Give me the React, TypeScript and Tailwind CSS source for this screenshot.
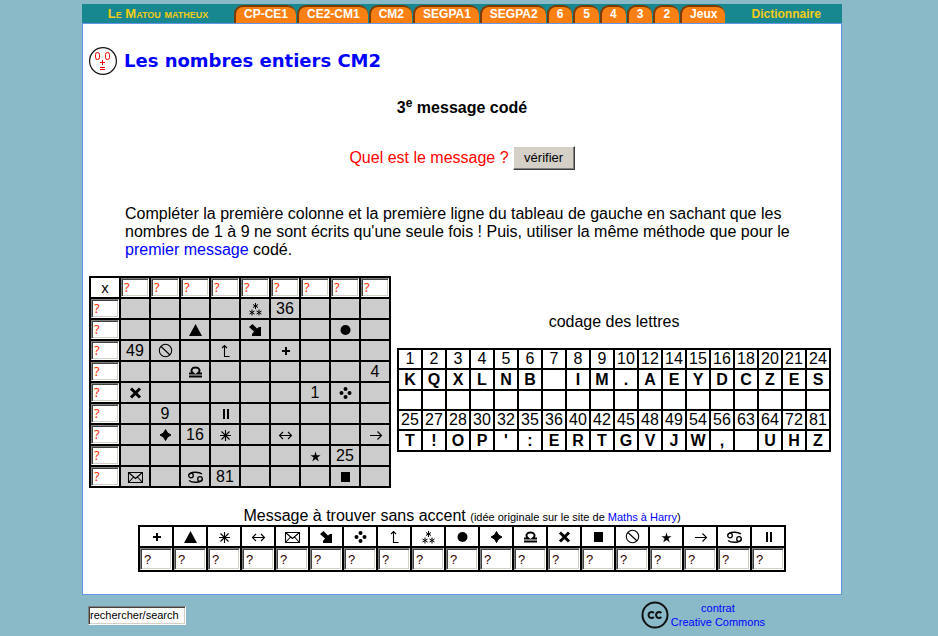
import React from "react";

type SymbolName =
  | "plus" | "triangle" | "star8" | "leftright" | "mail" | "southeast" | "dots" | "up"
  | "asterism" | "disc" | "star4" | "libra" | "cross" | "square" | "forbidden" | "star5"
  | "right" | "cancer" | "bars";

const shapes: Record<SymbolName, React.ReactNode> = {
  plus: <path d="M9 4v8M5 8h8" strokeWidth="2" shapeRendering="crispEdges" />,
  triangle: <path d="M8.500 2 15 14H2z" fill="currentColor" stroke="none" />,
  star8: <path d="M8.500 3v11M3 8.500h11M4.500 4.500l8 8M12.500 4.500l-8 8" />,
  leftright: <path d="M2.500 8.500h12M6 5 2.500 8.500 6 12M11 5l3.500 3.500L11 12" />,
  mail: <path d="M1.500 3.500h14v10h-14zM1.500 3.500l7 6 7-6M1.500 13.500l5-5.500M15.500 13.500l-5-5.500" />,
  southeast: <path d="M2 5l3.500-3L10 6.500 12 5h2v9H5v-2l2-2.500z" fill="currentColor" stroke="none" />,
  dots: (
    <g fill="currentColor" stroke="none">
      <circle cx="8.500" cy="4" r="2" /><circle cx="8.500" cy="12" r="2" />
      <circle cx="4.500" cy="8" r="2" /><circle cx="12.500" cy="8" r="2" />
    </g>
  ),
  up: <path d="M7.500 2.500v11h5M5 5l2.500-2.500L10 5" />,
  asterism: (
    <path
      d="M8.500 2v6M6 3.500l5 3M11 3.500l-5 3M5 8.500v6M2.500 10l5 3M7.500 10l-5 3M12 8.500v6M9.500 10l5 3M14.500 10l-5 3"
      strokeWidth="1"
    />
  ),
  disc: <circle cx="8.500" cy="8" r="5" fill="currentColor" stroke="none" />,
  star4: <path d="M8.500 2.500l2 3.500 3.500 2-3.500 2-2 3.500-2-3.500L3 8l3.500-2z" fill="currentColor" strokeWidth="1" />,
  libra: <path d="M2 12.500h13M2 9.500h4.500c-4-3 -1.500-6 2-6s6 3 2 6H15" strokeWidth="1.800" />,
  cross: <path d="M4 3.500l9 9M13 3.500l-9 9" strokeWidth="3" />,
  square: <path d="M4 3h9v10H4z" fill="currentColor" stroke="none" shapeRendering="crispEdges" />,
  forbidden: <><circle cx="8.500" cy="7.500" r="6.200" /><path d="M4 3.500l9 8.500" /></>,
  star5: <path d="M8.500 3.500l1.100 3.700h4l-3.200 2.200 1.400 4.100-3.300-2.600-3.300 2.600 1.400-4.100-3.200-2.200h4z" fill="currentColor" stroke="none" />,
  right: <path d="M3 8.500h11.500M10.500 4.500l4 4-4 4" />,
  cancer: (
    <g strokeWidth="1.300">
      <circle cx="4" cy="6.500" r="2.300" /><circle cx="13" cy="10" r="2.300" />
      <path d="M1.800 6C3 2.500 12 2.500 15 5M15.200 10.500C14 14 5 14 2 11.500" />
    </g>
  ),
  bars: <path d="M7 3v10M11 3v10" strokeWidth="2" shapeRendering="crispEdges" />,
};

function Glyph({ name }: { name: SymbolName }) {
  return (
    <svg viewBox="0 0 16 16" className="mx-auto block h-4 w-4" fill="none" stroke="currentColor" strokeWidth="1.1" role="img" aria-label={name}>
      {shapes[name]}
    </svg>
  );
}

const sunken =
  "block w-full border border-t-[#808080] border-l-[#808080] border-r-white border-b-white bg-white shadow-[inset_1px_1px_0_#404040,inset_-1px_-1px_0_#d4d0c8] outline-none";

const tabs = ["CP-CE1", "CE2-CM1", "CM2", "SEGPA1", "SEGPA2", "6", "5", "4", "3", "2", "Jeux"];

const grid: Record<number, string | SymbolName>[] = [
  { 4: "asterism", 5: "36" },
  { 2: "triangle", 4: "southeast", 7: "disc" },
  { 0: "49", 1: "forbidden", 3: "up", 5: "plus" },
  { 2: "libra", 8: "4" },
  { 0: "cross", 6: "1", 7: "dots" },
  { 1: "9", 3: "bars" },
  { 1: "star4", 2: "16", 3: "star8", 5: "leftright", 8: "right" },
  { 6: "star5", 7: "25" },
  { 0: "mail", 2: "cancer", 3: "81", 7: "square" },
];

const codeRows = [
  ["1", "2", "3", "4", "5", "6", "7", "8", "9", "10", "12", "14", "15", "16", "18", "20", "21", "24"],
  ["K", "Q", "X", "L", "N", "B", "", "I", "M", ".", "A", "E", "Y", "D", "C", "Z", "E", "S"],
  Array(18).fill(""),
  ["25", "27", "28", "30", "32", "35", "36", "40", "42", "45", "48", "49", "54", "56", "63", "64", "72", "81"],
  ["T", "!", "O", "P", "'", ":", "E", "R", "T", "G", "V", "J", "W", ",", "", "U", "H", "Z"],
];

const message: SymbolName[] = [
  "plus", "triangle", "star8", "leftright", "mail", "southeast", "dots", "up", "asterism", "disc",
  "star4", "libra", "cross", "square", "forbidden", "star5", "right", "cancer", "bars",
];

const nine = [0, 1, 2, 3, 4, 5, 6, 7, 8];

function GridInput({ label }: { label: string }) {
  return (
    <input
      aria-label={label}
      defaultValue="?"
      className={`${sunken} h-[19px] pb-[2px] pl-[2px] font-['Noto_Sans',sans-serif] text-[13px] leading-4 text-[#ff3300]`}
    />
  );
}

function MultiplicationGrid() {
  return (
    <table className="w-[302px] shrink-0 table-fixed border-collapse text-center text-base leading-[18px]">
      <tbody>
        <tr>
          <th className="h-[21px] border-2 border-black p-0 font-['Noto_Sans',sans-serif] text-sm leading-[18px] font-normal">x</th>
          {nine.map((c) => (
            <td key={c} className="h-[21px] border-2 border-black p-0"><GridInput label={`colonne ${c + 1}`} /></td>
          ))}
        </tr>
        {grid.map((row, r) => (
          <tr key={r}>
            <td className="h-[21px] border-2 border-black p-0"><GridInput label={`ligne ${r + 1}`} /></td>
            {nine.map((c) => {
              const v = row[c];
              return (
                <td key={c} className="h-[21px] border-2 border-black bg-[#cccccc] p-0">
                  {v && v in shapes ? <Glyph name={v as SymbolName} /> : v}
                </td>
              );
            })}
          </tr>
        ))}
      </tbody>
    </table>
  );
}

function CodeTable() {
  return (
    <div className="w-[434px] shrink-0 pt-px text-center">
      <p className="mb-[17px] leading-[18px]">codage des lettres</p>
      <table className="w-full table-fixed border-collapse leading-[18px]">
        <tbody>
          {codeRows.map((row, r) => {
            const letters = r === 1 || r === 4;
            return (
              <tr key={r} className={letters ? "h-[21px] font-bold" : "h-5"}>
                {row.map((v, c) => (
                  <td key={c} className="border-2 border-black p-0">{v}</td>
                ))}
              </tr>
            );
          })}
        </tbody>
      </table>
    </div>
  );
}

function MessageTable() {
  return (
    <table className="mx-auto w-[648px] table-fixed border-collapse">
      <tbody>
        <tr className="h-[21px]">
          {message.map((s) => (
            <td key={s} className="border-2 border-black p-0"><Glyph name={s} /></td>
          ))}
        </tr>
        <tr className="h-6">
          {message.map((s, i) => (
            <td key={s} className="border-2 border-black p-0">
              <input
                aria-label={`lettre ${i + 1}`}
                defaultValue="?"
                className={`${sunken} h-[22px] pl-[3px] font-['Liberation_Sans',Arial,sans-serif] text-[13px] leading-4 text-[#330000]`}
              />
            </td>
          ))}
        </tr>
      </tbody>
    </table>
  );
}

export default function App() {
  return (
    <div className="min-h-screen bg-[#8abac8] pt-1 pr-[14px] font-['Liberation_Sans',Arial,sans-serif] text-base text-black">
      <div className="mx-auto w-full max-w-[760px]">
        <nav className="flex h-[19px] items-end bg-[#188890] text-xs font-bold text-[#f5cc14]">
          <a href="#accueil" className="w-[152px] self-center text-center text-[13px] [font-variant:small-caps]">Le Matou matheux</a>
          {tabs.map((t) => (
            <a
              key={t}
              href={`#${t}`}
              className={`mr-px h-[18px] rounded-t-[9px] border-t-2 border-l-2 border-[#7a3a00] bg-[#fa8014] pl-2 leading-[14px] text-white ${t.length > 1 ? "pr-2" : "pr-[9px]"}`}
            >
              {t}
            </a>
          ))}
          <a href="#dictionnaire" className="flex-1 self-center pl-1 text-center">Dictionnaire</a>
        </nav>

        <main className="border border-[#6495ed] bg-white pb-[22px]">
          <header className="flex items-center gap-[7px] pt-[23px] pl-[6px]">
            <svg viewBox="0 0 28 28" className="h-7 w-7" fill="none" stroke="#f00000" role="img" aria-label="Matou">
              <circle cx="14" cy="14" r="13.400" stroke="#111111" strokeWidth="1.200" />
              <rect x="6.500" y="5.500" width="4" height="7" rx="2" />
              <rect x="16.500" y="5.500" width="4" height="7" rx="2" />
              <path d="M13.500 13v5M11 15.500h5M11 20.500h5M11 22.500h5" />
            </svg>
            <h1 className="font-['DejaVu_Sans',Verdana,sans-serif] text-lg leading-7 font-bold text-[#0000ff]">Les nombres entiers CM2</h1>
          </header>

          <h2 className="mt-[23px] text-center leading-5 font-bold">
            3<sup className="text-xs">e</sup> message codé
          </h2>

          <div className="mt-[28px] flex items-center justify-center gap-1 text-[#ff0000]">
            <span>Quel est le message ?</span>
            <button
              type="button"
              className="h-6 w-[62px] border border-t-white border-l-white border-r-[#404040] border-b-[#404040] bg-[#d4d0c8] text-[13px] text-black shadow-[inset_-1px_-1px_0_#808080]"
            >
              vérifier
            </button>
          </div>

          <p className="mt-[35px] px-[42px] leading-[18px]">
            Compléter la première colonne et la première ligne du tableau de gauche en sachant que les nombres de 1 à 9 ne
            sont écrits qu'une seule fois ! Puis, utiliser la même méthode que pour le{" "}
            <a href="#premier-message" className="text-[#0000ff]">premier message</a> codé.
          </p>

          <section className="mt-[17px] flex items-center gap-[6px] pl-[6px]">
            <MultiplicationGrid />
            <CodeTable />
          </section>

          <section className="mt-5">
            <p className="text-center leading-[15px]">
              Message à trouver sans accent{" "}
              <small className="text-[11px]">
                (idée originale sur le site de <a href="#maths-a-harry" className="text-[#0000ff]">Maths à Harry</a>)
              </small>
            </p>
            <MessageTable />
          </section>
        </main>

        <footer className="flex items-center justify-between pt-[6px] pr-[77px] pl-[6px]">
          <input
            aria-label="rechercher"
            defaultValue="rechercher/search"
            className={`${sunken} h-[19px] max-w-[98px] pl-px font-['Liberation_Sans',Arial,sans-serif] text-[11px]`}
          />
          <div className="flex items-center gap-[2px]">
            <svg viewBox="0 0 28 28" className="h-7 w-7" fill="none" stroke="#111111" role="img" aria-label="Creative Commons">
              <circle cx="14" cy="14" r="12.500" strokeWidth="2" />
              <path d="M12.800 12a3 3 0 1 0 0 4M20.300 12a3 3 0 1 0 0 4" strokeWidth="2" />
            </svg>
            <a href="#contrat" className="text-center text-[11px] leading-[14px] text-[#0000ff]">
              contrat<br />Creative Commons
            </a>
          </div>
        </footer>
      </div>
    </div>
  );
}
